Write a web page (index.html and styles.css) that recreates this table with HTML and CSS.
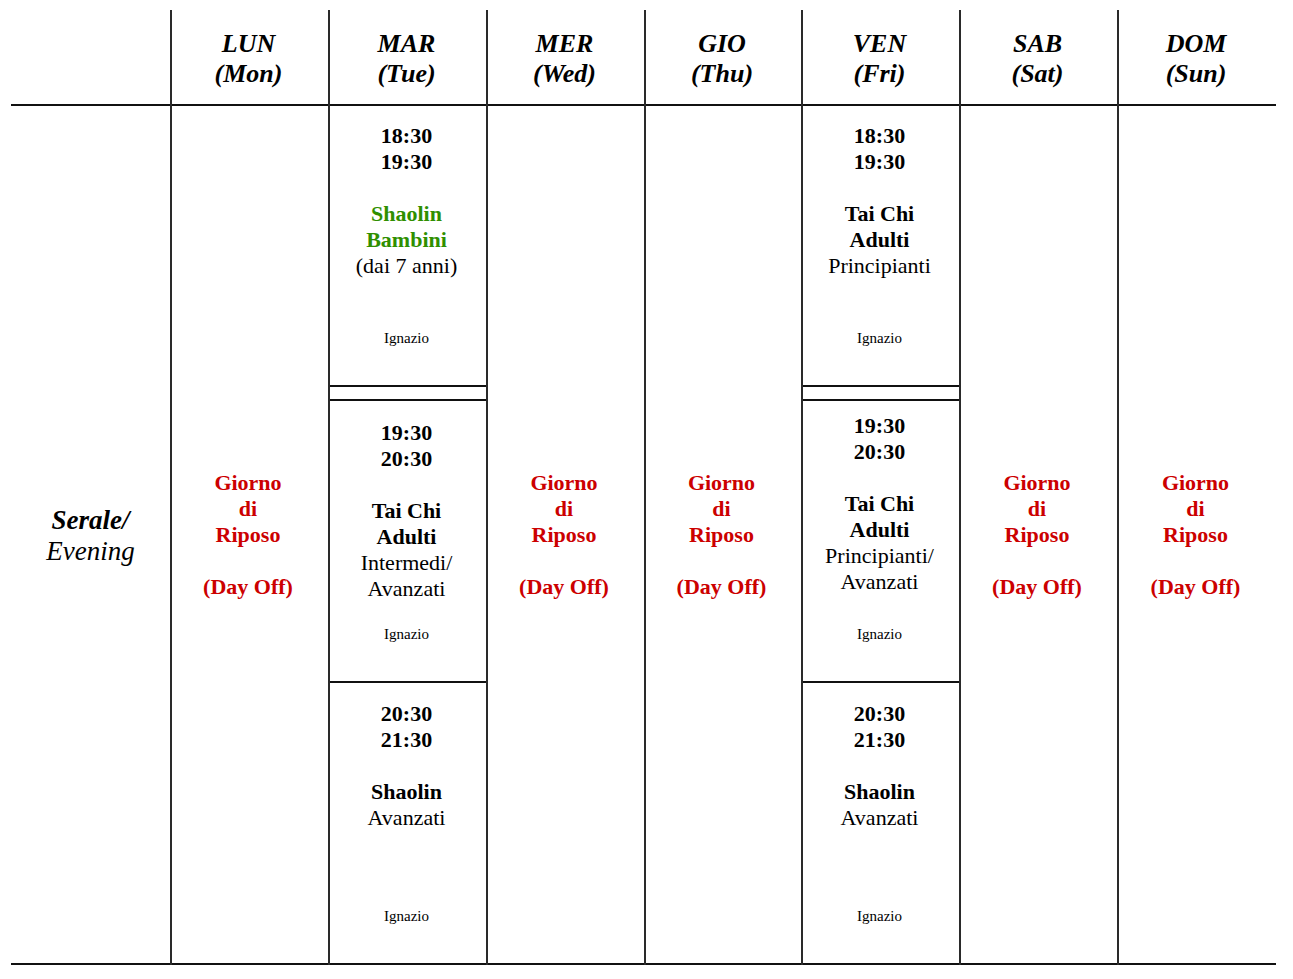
FILE: index.html
```html
<!DOCTYPE html>
<html lang="it">
<head>
<meta charset="utf-8">
<title>Orario Serale</title>
<link rel="stylesheet" href="styles.css">
</head>
<body>
<div class="table">
  <div class="col c1">
    <div class="head"></div>
    <div class="body center"><div class="serale"><b>Serale/</b><br>Evening</div></div>
  </div>
  <div class="col c2">
    <div class="head">LUN<br>(Mon)</div>
    <div class="body center"><div class="off">Giorno<br>di<br>Riposo<br><br>(Day Off)</div></div>
  </div>
  <div class="col c2">
    <div class="head">MAR<br>(Tue)</div>
    <div class="body stack">
      <div class="slot s1">
        <div class="txt"><b>18:30<br>19:30</b><br><br><b class="green">Shaolin<br>Bambini</b><br>(dai 7 anni)</div>
        <div class="teacher">Ignazio</div>
      </div>
      <div class="spacer"></div>
      <div class="slot s2">
        <div class="txt"><b>19:30<br>20:30</b><br><br><b>Tai Chi<br>Adulti</b><br>Intermedi/<br>Avanzati</div>
        <div class="teacher">Ignazio</div>
      </div>
      <div class="slot s3 last">
        <div class="txt"><b>20:30<br>21:30</b><br><br><b>Shaolin</b><br>Avanzati</div>
        <div class="teacher">Ignazio</div>
      </div>
    </div>
  </div>
  <div class="col c2">
    <div class="head">MER<br>(Wed)</div>
    <div class="body center"><div class="off">Giorno<br>di<br>Riposo<br><br>(Day Off)</div></div>
  </div>
  <div class="col c3">
    <div class="head">GIO<br>(Thu)</div>
    <div class="body center"><div class="off">Giorno<br>di<br>Riposo<br><br>(Day Off)</div></div>
  </div>
  <div class="col c2">
    <div class="head">VEN<br>(Fri)</div>
    <div class="body stack">
      <div class="slot s1">
        <div class="txt"><b>18:30<br>19:30</b><br><br><b>Tai Chi<br>Adulti</b><br>Principianti</div>
        <div class="teacher">Ignazio</div>
      </div>
      <div class="spacer"></div>
      <div class="slot s2 tight">
        <div class="txt"><b>19:30<br>20:30</b><br><br><b>Tai Chi<br>Adulti</b><br>Principianti/<br>Avanzati</div>
        <div class="teacher">Ignazio</div>
      </div>
      <div class="slot s3 last">
        <div class="txt"><b>20:30<br>21:30</b><br><br><b>Shaolin</b><br>Avanzati</div>
        <div class="teacher">Ignazio</div>
      </div>
    </div>
  </div>
  <div class="col c2">
    <div class="head">SAB<br>(Sat)</div>
    <div class="body center"><div class="off">Giorno<br>di<br>Riposo<br><br>(Day Off)</div></div>
  </div>
  <div class="col c1 lastcol">
    <div class="head">DOM<br>(Sun)</div>
    <div class="body center"><div class="off">Giorno<br>di<br>Riposo<br><br>(Day Off)</div></div>
  </div>
</div>
</body>
</html>
```

FILE: styles.css
```css
html, body {
  margin: 0;
  padding: 0;
  background: #ffffff;
}

body {
  font-family: "Liberation Serif", "Times New Roman", serif;
  color: #000;
}

.table {
  display: flex;
  margin: 10px 0 0 11px;
  width: 1265px;
}

.col {
  display: flex;
  flex-direction: column;
  box-sizing: border-box;
}

.col + .col {
  border-left: 2px solid #2a2a2a;
}

.c1 { width: 159px; }
.c2 { width: 158px; }
.c3 { width: 157px; }
.lastcol { width: 159px; }

.head {
  box-sizing: border-box;
  height: 96px;
  border-bottom: 2px solid #111;
  display: flex;
  align-items: center;
  justify-content: center;
  text-align: center;
  font-weight: bold;
  font-style: italic;
  font-size: 26px;
  line-height: 30px;
  padding-top: 4px;
  padding-right: 3px;
}

.body {
  box-sizing: border-box;
  height: 859px;
  border-bottom: 2px solid #111;
}

.center {
  display: flex;
  align-items: center;
  justify-content: center;
  text-align: center;
}

.serale {
  font-style: italic;
  font-size: 27px;
  line-height: 31px;
  padding-top: 2px;
}

.off {
  color: #cc0000;
  font-weight: bold;
  font-size: 22px;
  line-height: 26px;
  padding-top: 1px;
  padding-right: 4px;
}

.stack {
  display: flex;
  flex-direction: column;
}

.slot {
  box-sizing: border-box;
  display: flex;
  flex-direction: column;
  align-items: center;
  text-align: center;
  border-bottom: 2px solid #111;
  padding-bottom: 38px;
  padding-right: 3px;
}

.slot.s1 { height: 281px; padding-top: 17px; }
.slot.s2 { height: 282px; padding-top: 19px; }
.slot.s3 { padding-top: 18px; }
.slot.tight { padding-top: 12px; }
.slot.last {
  flex: 1;
  border-bottom: none;
  padding-bottom: 38px;
}

.spacer {
  box-sizing: border-box;
  height: 14px;
  border-bottom: 2px solid #111;
}

.txt {
  font-size: 22px;
  line-height: 26px;
}

.green {
  color: #2f8f00;
}

.teacher {
  margin-top: auto;
  font-size: 15px;
  line-height: 17px;
}
```
